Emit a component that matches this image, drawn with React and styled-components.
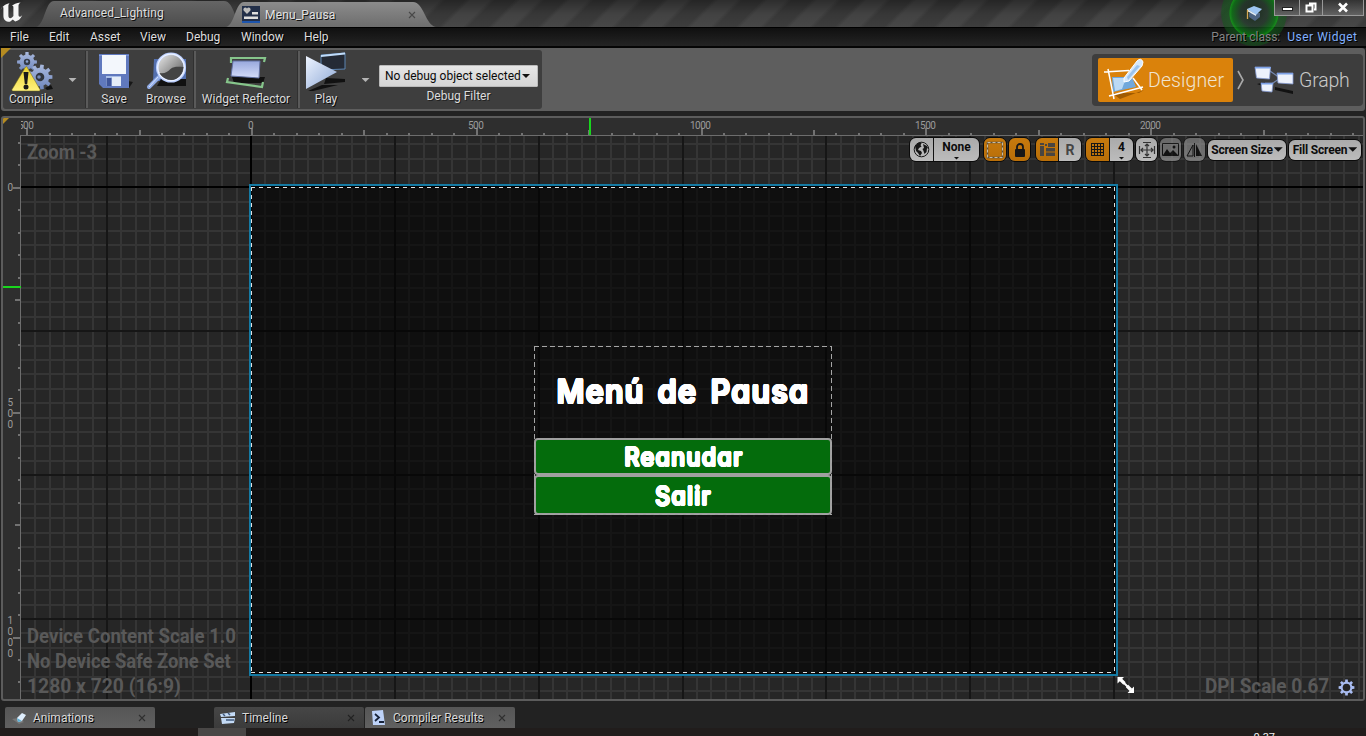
import React from "react";
import styled, { createGlobalStyle, css } from "styled-components";

const Global = createGlobalStyle`
  * { box-sizing: border-box; }
  body { margin: 0; overflow: hidden; background: #222; font-family: Roboto, "Liberation Sans", sans-serif; font-size: 12px; color: #dcdcdc; }
  svg { display: block; flex: none; }
`;

const Window = styled.div`
  width: 1366px; height: 736px; display: flex; flex-direction: column;
  overflow: hidden; background: #222; position: relative;
`;

/* ---------- title bar ---------- */
const TitleBar = styled.header`
  height: 28px; flex: none; display: flex; align-items: flex-start;
  border-bottom: 1px solid #000;
  background:
    linear-gradient(180deg, rgba(0,0,0,.32) 0, rgba(0,0,0,0) 14px, rgba(255,255,255,.03) 27px),
    repeating-linear-gradient(135deg, #373737 0 14px, #424242 18px 31px, #373737 35px);
`;
const Logo = styled.div` width: 36px; height: 27px; padding: 2px 0 0 0; `;
const Tab = styled.div`
  height: 27px; display: flex; align-items: center; flex: none;
  color: #dedede; text-shadow: 1px 1px 0 #111; letter-spacing: .16px;
  ${(p) => p.$active ? css`
    width: 210px; margin-left: -14px; padding: 2px 20px 0 16px; gap: 5px; color: #e2e2e2;
    background: linear-gradient(#8e8e8e, #6d6d6d);
    clip-path: path("M0 27 C9 25 9 2 18 2 L187 2 C198 2 199 25 210 27 Z");
  ` : css`
    width: 204px; padding: 0 24px 1px 24px;
    background: linear-gradient(#666, #4c4c4c);
    clip-path: path("M0 27 C9 25 9 1 18 1 L188 1 C199 1 199 27 208 27 Z");
  `}
`;
const TabName = styled.span` flex: 1; white-space: nowrap; `;
const TitleSpace = styled.div` flex: 1; `;
const WindowButtons = styled.div` display: flex; margin-right: 2px; height: 16px; position: relative; z-index: 3; `;
const WindowButton = styled.div`
  width: ${(p) => p.$w}px; height: 16px; display: flex; justify-content: center;
  border: 1px solid #999; border-top: 0; background: linear-gradient(#333, #626262);
  & + & { border-left: 0; }
`;
const TutorialBadge = styled.div` position: absolute; left: 1220px; top: 0; z-index: 2; `;

/* ---------- menu bar ---------- */
const MenuBar = styled.nav`
  height: 20px; flex: none; display: flex; align-items: center; padding: 0 9px 1px 10px;
  background: linear-gradient(#101010, #242424); border-bottom: 2px solid #050505;
  text-shadow: 1px 1px 0 #000; color: #dedede;
`;
const MenuItem = styled.span` width: ${(p) => p.$w}px; white-space: nowrap; `;
const ParentClass = styled.span` margin-left: auto; color: #858585; display: flex; gap: 7px; position: relative; z-index: 3; `;
const ClassLink = styled.span` color: #80b0ff; letter-spacing: .5px; margin-right: -.5px; `;

/* ---------- toolbar ---------- */
const ToolbarRow = styled.div`
  height: 63px; flex: none; display: flex; justify-content: space-between;
  margin: 0 1px; border: 2px solid #5e5e5e; border-radius: 3px; background: #5e5e5e; position: relative;
`;
const Corner = styled.i`
  position: absolute; left: -2px; top: -2px; width: 10px; height: 10px;
  background: #b58b21; clip-path: polygon(0 0, 100% 0, 0 100%);
`;
const ToolGroup = styled.div`
  display: flex; background: #3e3e3e; border-radius: 3px; width: 539px; height: 59px;
`;
const ToolButton = styled.div`
  width: ${(p) => p.$w}px; display: flex; flex-direction: column; align-items: center;
  padding-top: 1px; text-shadow: 1px 1px 0 #0b0b0b; white-space: nowrap; color: #dadada;
`;
const ToolLabel = styled.span` line-height: 14px; margin-top: -1px; `;
const Divider = styled.div` width: 2px; margin: 1px 0 1px ${(p) => p.$before || 0}px; background: #5a5a5a; box-shadow: -1px 0 #303030; `;
const Arrow = styled.i`
  width: ${(p) => p.$s || 8}px; height: ${(p) => (p.$s || 8) / 2}px; flex: none;
  background: ${(p) => p.$c || "#b5b5b5"}; clip-path: polygon(0 0, 100% 0, 50% 100%);
`;
const ArrowSlot = styled.div` width: ${(p) => p.$w}px; display: flex; justify-content: center; padding-top: 28px; `;
const FilterBox = styled.div` display: flex; flex-direction: column; align-items: center; padding: 15px 0 0 0; line-height: 14px; gap: 2px; text-shadow: 1px 1px 0 #222; `;
const Select = styled.div`
  width: 159px; height: 22px; background: linear-gradient(#e6e6e6, #d5d5d5); color: #0a0a0a; border: 1px solid #bbb;
  display: flex; align-items: center; justify-content: space-between; padding: 0 7px 0 5px; text-shadow: none; border-radius: 1px;
`;
const ModeGroup = styled.div`
  width: 271px; height: 52px; margin: 4px 0 0; background: #3d3d3d; border-radius: 4px;
  display: flex; align-items: center; padding-left: 6px; color: #c9c9c9; font-size: 19.5px; font-weight: 300;
`;
const Mode = styled.div`
  height: 44px; display: flex; align-items: center; border-radius: 2px; gap: ${(p) => p.$gap || 0}px;
  letter-spacing: -.2px;
  ${(p) => p.$active && css` width: 135px; background: #da820b; color: #f0e4d2; letter-spacing: .1px; padding-left: 1px; `}
`;

/* ---------- designer viewport ---------- */
const Viewport = styled.main`
  margin: 5px 1px 0 1px; height: 585px; flex: none; position: relative; overflow: hidden;
  border: 2px solid #5c5c5c; border-radius: 3px; background: #2e2e2e;
`;
const Surface = styled.div` position: absolute; left: -3px; top: -118px; width: 1366px; height: 736px; `;
const Sheet = styled.svg` position: absolute; left: 0; top: 0; `;
const TickLabel = styled.span`
  position: absolute; font-size: 10px; line-height: 11px; color: #9b9b9b; letter-spacing: -.5px;
  left: ${(p) => p.$x}px; top: ${(p) => p.$y}px;
  ${(p) => p.$stack && css` width: 12px; display: flex; flex-direction: column; align-items: center; `}
`;
const RulerMask = styled.div` position: absolute; left: 21px; top: 119px; width: 30px; height: 13px; overflow: hidden; `;
const Watermark = styled.div`
  position: absolute; left: ${(p) => p.$x}px; top: ${(p) => p.$y}px; white-space: nowrap;
  font-size: 20px; line-height: 25px; font-weight: 700; color: #595959;
`;
const Narrow = styled.div` width: max-content; transform: scaleX(${(p) => p.$k || 0.93}); transform-origin: 0 0; `;
const Gear = styled.div` position: absolute; left: 1338px; top: 679px; `;
const ResizeHandle = styled.div` position: absolute; left: 1117px; top: 676px; `;

const disc = (r) => Array.from({ length: 16 }, (_, i) =>
  `${(Math.cos((i * Math.PI) / 8) * r).toFixed(2)}px ${(Math.sin((i * Math.PI) / 8) * r).toFixed(2)}px 0 #fff`).join(",");

const MenuPanel = styled.section`
  position: absolute; left: 534px; top: 346px; width: 298px; height: 169px;
  display: flex; flex-direction: column; color: #fff; z-index: 1;
  font-family: Inter, Lato, sans-serif; font-weight: 500; font-feature-settings: "cv11" 1;
  text-align: center; text-shadow: ${disc(1.3)};
`;
const MenuTitle = styled.h1`
  margin: 0; height: 92px; font-size: 33px; line-height: 91px; white-space: nowrap; font-weight: inherit;
  letter-spacing: 1.6px; word-spacing: 4px; transform: scaleX(.92);
`;
const GameButton = styled.div`
  height: ${(p) => p.$h}px; border: 2px solid #a0a0a0; border-radius: 4px; background: rgba(4,112,12,.97);
  font-size: 25px; line-height: ${(p) => p.$h - 2}px; text-shadow: ${disc(1)};
`;
const ButtonText = styled.span` display: inline-block; letter-spacing: 1.4px; margin-right: -1.4px; transform: scaleX(.93); `;

const DesignerBar = styled.div`
  position: absolute; left: 909px; top: 137px; display: flex; align-items: center; height: 25px;
  color: #0c0c0c; font-weight: 700;
`;
const Segments = styled.div`
  display: flex; height: ${(p) => p.$h || 25}px; overflow: hidden; margin-right: ${(p) => p.$gap || 0}px;
  border: 1px solid #0b0b0b; border-radius: 7px; opacity: ${(p) => (p.$off ? 0.5 : 1)};
`;
const Segment = styled.div`
  width: ${(p) => p.$w}px; display: flex; align-items: center; justify-content: center; position: relative; white-space: nowrap;
  background: ${(p) => p.$on ? "linear-gradient(#c67a0e,#b96e08)" : "linear-gradient(#aaa,#bcbcbc)"};
  & + & { border-left: ${(p) => (p.$plain ? 0 : 1)}px solid #111; }
  gap: ${(p) => (p.$tight ? 1 : 2)}px; letter-spacing: ${(p) => (p.$tight ? "-.2px" : "0")};
`;
const Letter = styled.span` color: #454545; font-size: 14px; `;
const Stacked = styled.div` display: flex; flex-direction: column; align-items: center; line-height: 13px; gap: 3px; padding-top: 1px; `;

/* ---------- bottom docks ---------- */
const Dock = styled.footer` height: 27px; flex: none; display: flex; padding: 6px 0 0 5px; background: #222; `;
const DockTab = styled.div`
  width: 150px; height: 21px; display: flex; align-items: center; border-radius: 2px 2px 0 0; margin-right: ${(p) => p.$gap || 0}px;
  padding: 0 9px 0 6px; gap: ${(p) => p.$g || 6}px; text-shadow: 1px 1px 0 #000; color: #d8d8d8;
  background: ${(p) => p.$dim ? "linear-gradient(#464646,#3b3b3b)" : "linear-gradient(#565656,#606060)"};
`;
const UnderStrip = styled.div`
  height: 9px; flex: none; background: #211d1c; display: flex; justify-content: space-between; padding: 0 91px 0 198px; overflow: hidden;
`;
const StripBlock = styled.i` width: 48px; height: 9px; background: #494746; `;
const StripText = styled.span` font-size: 11px; line-height: 12px; padding-top: 4px; color: #f0f0f0; `;

/* ---------- drawings ---------- */
const Close = ({ c = "#555" }) => (
  <svg width="8" height="8" viewBox="0 0 8 8"><path d="M1 1l6 6M7 1L1 7" stroke={c} strokeWidth="1.1" /></svg>
);
const Unreal = () => (
  <svg width="24" height="21" viewBox="0 0 24 21">
    <path fill="#f4f4f4" d="M.5 8.2C2.6 3.7 6 1.7 9.7 1.2 8.8 2 8.4 2.8 8.4 4v9.4c0 1.7.7 2.8 1.8 2.8 1.2 0 2.4-1 3.2-2.1V5.2c0-1.1-.5-1.5-1.5-1.1 1.8-2 4.1-3 8.8-3.6-1.6 1.1-2.2 2-2.2 3.4v8.9c0 1.3.5 1.9 1.3 1.9.8 0 1.6-.6 2.4-1.5-1.6 4-4.2 5.7-7 6.2l-2.4-2-2.8 2.4c-4 .2-6.6-2-6.6-5.8V6.4c0-1.1-.2-1.4-.7-1.4C2 5 1.200 6.300.5 8.200z" />
  </svg>
);
const WidgetIcon = () => (
  <svg width="18" height="17" viewBox="0 0 18 17">
    <rect width="18" height="17" fill="#222f49" /><rect y="15" width="18" height="2" fill="#1d55ad" />
    <path d="M5 8 1.600 4.600C.5 2 3.600.300 5 2.400 6.400.300 9.500 2 8.400 4.600z" fill="#bdbdbd" />
    <path d="M10 6h6v2.500h-6zM2 10.500h14V13H2z" fill="#ddd" />
  </svg>
);
const gearPath = (cx, cy, r, n = 8) => {
  let d = "";
  for (let i = 0; i < n; i++) {
    const a = (i * 2 * Math.PI) / n, s = Math.PI / n;
    const pt = (t, q) => `${(cx + Math.cos(t) * q).toFixed(1)} ${(cy + Math.sin(t) * q).toFixed(1)}`;
    d += `${i ? "L" : "M"}${pt(a - s * 0.6, r * 0.74)}L${pt(a - s * 0.4, r)}L${pt(a + s * 0.4, r)}L${pt(a + s * 0.6, r * 0.74)}`;
  }
  return d + "Z";
};
const CompileIcon = () => (
  <svg width="44" height="42" viewBox="0 0 44 42">
    <defs><linearGradient id="cg" x2="0" y2="1"><stop stopColor="#a9b9dd" /><stop offset="1" stopColor="#6f87bd" /></linearGradient>
      <linearGradient id="cy" x2="0" y2="1"><stop stopColor="#e8d02c" /><stop offset="1" stopColor="#fff27e" /></linearGradient></defs>
    <path d="M36 37l6-3 2 4-6 1z" fill="#111" />
    <path d={gearPath(18, 11, 10)} fill="url(#cg)" /><circle cx="18" cy="11" r="3.2" fill="#343b49" /><circle cx="18" cy="10.500" r="1.300" fill="#8ba2d1" />
    <path d={gearPath(31, 26, 12.500, 9)} fill="url(#cg)" /><circle cx="31" cy="26" r="4.300" fill="#30343c" /><circle cx="30" cy="26" r="1.800" fill="#7389b7" />
    <path d="M16.500 16 3 38.500q-.5 1.500 1 1.500h26q1.500 0 1-1.500L18 16q-.7-1-1.500 0z" fill="url(#cy)" stroke="#6b6019" strokeWidth=".5" />
    <path d="M14.500 21h5l-1.300 12h-2.400z" fill="#191919" /><circle cx="17" cy="36" r="2.500" fill="#191919" />
  </svg>
);
const SaveIcon = () => (
  <svg width="40" height="42" viewBox="0 0 40 42">
    <path d="M34 30l5 1-4 6H12z" fill="#171717" />
    <path d="M5 3h30v34H9l-4-4z" fill="#6079be" /><path d="M5 4h30v1H5z" fill="#7894d4" />
    <path d="M8 4h24v19H8z" fill="#f3f7fc" /><path d="M12 25h15v10H12z" fill="#a9bfe8" /><path d="M12.500 27h5v8h-5z" fill="#3f559a" /><path d="M18 26h9v9h-9z" fill="#e4edf8" />
  </svg>
);
const BrowseIcon = () => (
  <svg width="42" height="42" viewBox="0 0 42 42">
    <defs><linearGradient id="bg" x2="1" y2="1"><stop stopColor="#eee" /><stop offset=".6" stopColor="#8d8d8d" /><stop offset="1" stopColor="#333" /></linearGradient></defs>
    <path d="M9 8h32v22H8z" fill="#536fae" /><path d="M16 28h25v7H12z" fill="#111" />
    <path d="M14 26 4 36" stroke="#92ade7" strokeWidth="4" strokeLinecap="round" /><path d="M13 26 4 36" stroke="#d5e2ff" />
    <circle cx="26" cy="16.500" r="13.800" fill="url(#bg)" stroke="#b9ceff" strokeWidth="2.500" />
    <circle cx="26" cy="16.500" r="13.300" fill="none" stroke="#eef3ff" strokeWidth="1.300" />
    <path d="M14.500 22c5 1 8-1 11-4 4-3 8-2 13-2-1 7-6 13-12 13-5 0-10-3-12-7" fill="#444" />
  </svg>
);
const ReflectorIcon = () => (
  <svg width="44" height="42" viewBox="0 0 44 42">
    <defs><linearGradient id="rg" x2="0" y2="1"><stop stopColor="#98a8dc" /><stop offset="1" stopColor="#d5ddfa" /></linearGradient></defs>
    <path d="M8 26h33l-2 6H10z" fill="#111" /><path d="M9 10h27l-1 17-28-2z" fill="url(#rg)" stroke="#6170a1" />
    <path d="M7 12V7h34l-1 4M4 27l-1 4 35 5 1-5" fill="none" stroke="#86c58b" strokeWidth="2.200" />
  </svg>
);
const PlayIcon = () => (
  <svg width="44" height="42" viewBox="0 0 44 42">
    <defs><linearGradient id="pg" x2="1" y2="1"><stop stopColor="#eef4ff" /><stop offset="1" stopColor="#8da8d5" /></linearGradient></defs>
    <path d="M17 4 41 2v16l-24 1z" fill="#242a35" stroke="#5b84b2" /><path d="M17 4 41 1.500v2L17 6z" fill="#c0dcfa" />
    <path d="M4 40l14-6 16 0-25 6zM22 27l19 1v3l-21 2z" fill="#111" /><path d="M2 5 33 21 2 38z" fill="url(#pg)" />
  </svg>
);
const DesignerIcon = () => (
  <svg width="49" height="44" viewBox="0 0 49 44">
    <path d="M13 35h27l5-3-24 9z" fill="#a05b00" /><path d="M13 19h20l4 10-23 5z" fill="#71a8db" /><path d="M14 20h13l-4 11-7 2z" fill="#bcdaf5" />
    <path d="M5 14 30 12.500M10 38 44 29M9 11l6 30M34 20l9 12" stroke="#fff" strokeWidth="1.500" />
    <path d="M25 20 38 3q4-4 6 1l-1 4-13 15-5 1z" fill="#d5e8fb" stroke="#fff" /><path d="M28 19 38 7l3 1-12 14z" fill="#9bc3ed" />
  </svg>
);
const GraphIcon = () => (
  <svg width="42" height="36" viewBox="0 0 42 36">
    <path d="M4 22l8-2v5zM22 25l18 4v3l-18-4z" fill="#121212" />
    <path d="M17 9 27 16M17 23l9-6" stroke="#7386ad" strokeWidth="1.200" />
    <g fill="#edf2fc" stroke="#8398cf" strokeWidth=".8"><path d="M2 5l15.500 0-1 12-13-1z" /><path d="M24 11l16 0v11l-15-1z" /><path d="M8 21l12 0-1 9-10-1z" /></g>
    <path d="M2 5h16v1.500H2zM24 11h16v1.500H24zM8 21h12v1.500H8z" fill="#7da1e6" />
  </svg>
);
const Tutorial = () => (
  <svg width="68" height="48" viewBox="0 0 68 48">
    <defs><radialGradient id="tg"><stop offset="0" stopColor="#1d2b1e" /><stop offset=".4" stopColor="#22382a" stopOpacity=".75" /><stop offset=".66" stopColor="#0a7613" stopOpacity=".8" /><stop offset=".73" stopColor="#0f9d14" stopOpacity=".8" /><stop offset=".76" stopColor="#12651b" stopOpacity=".55" /><stop offset="1" stopColor="#115819" stopOpacity=".5" /></radialGradient></defs>
    <circle cx="34" cy="13" r="33" fill="url(#tg)" />
    <path d="M29 13v4l6 4 5-4v-4z" fill="#4c6381" /><path d="M27 9l7-3 8 3-6 6z" fill="#9dc5f2" /><path d="M27 9l9 5.500v1.500l-9-5z" fill="#e4edf4" /><path d="M27.500 10v9" stroke="#d4a653" strokeWidth="1.300" />
  </svg>
);

const range = (a, b) => Array.from({ length: b - a + 1 }, (_, i) => a + i);

const GridSheet = () => {
  const line = (k) => (k === 0 ? "#000" : k % 10 === 0 ? "#161616" : "#353535");
  const xs = range(-15, 77), ys = range(-3, 35);
  const vx = (k) => <rect key={"v" + k} x={Math.floor(250.44 + 14.387 * k)} y="136" width="2" height="564" fill={line(k)} />;
  const hy = (k) => <rect key={"h" + k} x="21" y={Math.floor(186.85 + 14.387 * k)} width="1343" height="2" fill={line(k)} />;
  const tick = (k) => (k % 10 === 0 ? 7 : k % 5 === 0 ? 5 : 2);
  return (
    <Sheet width="1366" height="736" shapeRendering="crispEdges">
      <rect x="21" y="136" width="1343" height="564" fill="#262626" />
      {xs.filter((k) => k % 10).map(vx)}{ys.filter((k) => k % 10).map(hy)}
      {xs.filter((k) => k && k % 10 === 0).map(vx)}{ys.filter((k) => k && k % 10 === 0).map(hy)}
      {vx(0)}{hy(0)}
      <path d="M21 135.500H1364M20.500 135V700" stroke="#6d6d6d" />
      {range(-10, 49).map((k) => <rect key={"t" + k} x={Math.round(250.900 + 22.480 * k)} y={135 - tick(k)} width="2" height={tick(k)} fill="#727272" />)}
      {range(-2, 22).map((k) => <rect key={"l" + k} x={20 - tick(k)} y={Math.round(186.900 + 22.480 * k)} width={tick(k)} height="2" fill="#727272" />)}
      <path d="M590 118V135M3 287H21" stroke="#19d51d" strokeWidth="2" />
      <rect x="251" y="187" width="864" height="486" fill="#000" opacity=".6" />
      <rect x="250" y="185" width="867" height="490" fill="none" stroke="#157aa3" strokeWidth="2" />
      <rect x="251" y="187" width="864" height="486" fill="none" stroke="#080808" />
      <path d="M251 187.500H1115M251.500 187V673M1114.500 187V673M251 672.500H1115" stroke="#e0e0e0" strokeDasharray="4 4" />
    </Sheet>
  );
};

const PanelSheet = styled(Sheet)` z-index: 2; `;
const PanelDashes = () => (
  <PanelSheet width="1366" height="736" shapeRendering="crispEdges">
    <path d="M534 346.500H832M534.500 346V515M831.500 346V515M534 514.500H832" stroke="#a5a5a5" strokeDasharray="5 3" />
  </PanelSheet>
);

const ink = "#171717";
const Tools = () => (
  <DesignerBar>
    <Segments $gap={3}>
      <Segment $w={23}><svg width="17" height="17" viewBox="0 0 17 17"><circle cx="8.500" cy="8.500" r="7.300" fill="#b8b8b8" stroke={ink} /><path fill={ink} d="M2 5 5 2l4-.5L7.500 4l1 1.500L6 7 5 9l3 1 1 2-2 3-2-3-2-2zM10 3l4 2 1.500 3L14 7l-.5 4-2 2-1-3-1-2 1.500-1z" /></svg></Segment>
      <Segment $w={46}><Stacked>None<Arrow $s={6} $c="#111" /></Stacked></Segment>
    </Segments>
    <Segments $gap={1}><Segment $on $w={22}><svg width="18" height="18" viewBox="0 0 18 18"><rect x="1.500" y="1.500" width="15" height="15" fill="none" stroke="#5a5040" strokeWidth="1.500" /><rect x="1.500" y="1.500" width="15" height="15" fill="none" stroke="#c4bba8" strokeWidth="1" strokeDasharray="3 2" /></svg></Segment></Segments>
    <Segments $gap={4}><Segment $on $w={21}><svg width="12" height="14" viewBox="0 0 12 14"><rect x="1" y="6" width="10" height="8" rx="1" fill={ink} /><path d="M3 7V4a3 3 0 0 1 6 0v3" fill="none" stroke={ink} strokeWidth="1.800" /></svg></Segment></Segments>
    <Segments $gap={3}>
      <Segment $on $w={22}><svg width="15" height="13" viewBox="0 0 15 13"><path d="M0 3h4v10H0zM0 0h4v2H0zM5 1h2v2H5zM8 0h7v4H8zM6 5h9v3.500H6zM6 9.500h9V13H6z" fill="#494541" /></svg></Segment>
      <Segment $w={23} $plain><Letter>R</Letter></Segment>
    </Segments>
    <Segments $gap={1}>
      <Segment $on $w={23}><svg width="13" height="13" viewBox="0 0 13 13" shapeRendering="crispEdges"><path d="M0 .5h13M0 3.500h13M0 6.500h13M0 9.500h13M0 12.500h13M.5 0v13M3.500 0v13M6.500 0v13M9.500 0v13M12.500 0v13" stroke={ink} /></svg></Segment>
      <Segment $w={24}><Stacked>4<Arrow $s={6} $c="#111" /></Stacked></Segment>
    </Segments>
    <Segments $gap={1}><Segment $w={21}><svg width="18" height="18" viewBox="0 0 18 18"><path d="M5 1.500h8M5 16.500h8M1.500 5v8M16.500 5v8M9 3v12M3 9h12M7 5l2-2 2 2M7 13l2 2 2-2M5 7 3 9l2 2M13 7l2 2-2 2" fill="none" stroke="#333" strokeWidth="1.200" /></svg></Segment></Segments>
    <Segments $off $gap={1}><Segment $w={21}><svg width="17" height="13" viewBox="0 0 17 13"><path d="M.5.5h16v12H.500z" fill="none" stroke="#000" /><path d="M1 12l4-6 3 4 3-3 5 5z" fill="#000" /><circle cx="12" cy="4" r="1.500" /></svg></Segment></Segments>
    <Segments $off $gap={1}><Segment $w={21}><svg width="17" height="14" viewBox="0 0 17 14"><path d="M7 2v11H1z" fill="none" stroke="#000" /><path d="M10 1v12h6z" /><path d="M8.500 0v14" stroke="#000" /></svg></Segment></Segments>
    <Segments $h={22} $gap={1}><Segment $w={78} $tight>Screen Size<Arrow $s={9} $c="#111" /></Segment></Segments>
    <Segments $h={22}><Segment $w={72} $tight>Fill Screen<Arrow $s={9} $c="#111" /></Segment></Segments>
  </DesignerBar>
);

export default function App() {
  return (
    <Window>
      <Global />
      <TitleBar>
        <Logo><Unreal /></Logo>
        <Tab><TabName>Advanced_Lighting</TabName></Tab>
        <Tab $active><WidgetIcon /><TabName>Menu_Pausa</TabName><Close c="#484848" /></Tab>
        <TitleSpace />
        <WindowButtons>
          <WindowButton $w={26}><svg width="12" height="15"><rect x="1.500" y="7.500" width="10" height="3" fill="#fff" stroke="#222" /></svg></WindowButton>
          <WindowButton $w={23}><svg width="12" height="15" viewBox="0 0 12 15"><path d="M4 3.500h6.500v6H9M1.500 5.500h6v6h-6z" fill="none" stroke="#fff" strokeWidth="2" /></svg></WindowButton>
          <WindowButton $w={41}><svg width="12" height="15" viewBox="0 0 12 15"><path d="M2 3.500l8 8M10 3.500l-8 8" stroke="#fff" strokeWidth="2.600" /></svg></WindowButton>
        </WindowButtons>
      </TitleBar>
      <TutorialBadge><Tutorial /></TutorialBadge>

      <MenuBar>
        {[["File", 39], ["Edit", 41], ["Asset", 50], ["View", 46], ["Debug", 55], ["Window", 63], ["Help", 40]].map(([t, w]) => <MenuItem key={t} $w={w}>{t}</MenuItem>)}
        <ParentClass>Parent class:<ClassLink>User Widget</ClassLink></ParentClass>
      </MenuBar>

      <ToolbarRow>
        <ToolGroup>
          <ToolButton $w={56}><CompileIcon /><ToolLabel>Compile</ToolLabel></ToolButton>
          <ArrowSlot $w={27}><Arrow /></ArrowSlot>
          <Divider />
          <ToolButton $w={52}><SaveIcon /><ToolLabel>Save</ToolLabel></ToolButton>
          <ToolButton $w={52}><BrowseIcon /><ToolLabel>Browse</ToolLabel></ToolButton>
          <Divider $before={2} />
          <ToolButton $w={100}><ReflectorIcon /><ToolLabel>Widget Reflector</ToolLabel></ToolButton>
          <Divider $before={2} />
          <ToolButton $w={52}><PlayIcon /><ToolLabel>Play</ToolLabel></ToolButton>
          <ArrowSlot $w={27}><Arrow /></ArrowSlot>
          <FilterBox><Select>No debug object selected<Arrow $c="#111" /></Select>Debug Filter</FilterBox>
        </ToolGroup>
        <ModeGroup>
          <Mode $active><DesignerIcon />Designer</Mode>
          <svg width="20" height="24" viewBox="0 0 20 24"><path d="M5 3l5 9-5 9" fill="none" stroke="#a9a9a9" strokeWidth="1.600" /></svg>
          <Mode $gap={4}><GraphIcon />Graph</Mode>
        </ModeGroup>
        <Corner />
      </ToolbarRow>

      <Viewport>
        <Surface>
          <GridSheet />
          <RulerMask><TickLabel $x={-3} $y={1}>500</TickLabel></RulerMask>
          <TickLabel $x={248} $y={120}>0</TickLabel>
          {[500, 1000, 1500, 2000].map((n, i) => <TickLabel key={n} $x={[468, 690, 915, 1140][i]} $y={120}>{n}</TickLabel>)}
          {[["0", 182], ["500", 397], ["1000", 615]].map(([n, y]) => (
            <TickLabel key={n} $stack $x={4} $y={y}>{n.split("").map((d, i) => <span key={i}>{d}</span>)}</TickLabel>
          ))}
          <Watermark $x={27} $y={140}><Narrow $k={0.92}>Zoom -3</Narrow></Watermark>
          <Watermark $x={27} $y={624}>
            <Narrow>Device Content Scale 1.0</Narrow><Narrow $k={0.92}>No Device Safe Zone Set</Narrow><Narrow $k={0.965}>1280 x 720 (16:9)</Narrow>
          </Watermark>
          <Watermark $x={1205} $y={674}><Narrow $k={0.945}>DPI Scale 0.67</Narrow></Watermark>
          <Gear><svg width="17" height="17" viewBox="0 0 17 17"><path d={gearPath(8.5, 8.5, 8)} fill="#a9bcf0" /><circle cx="8.500" cy="8.500" r="3.800" fill="#242424" /></svg></Gear>
          <ResizeHandle><svg width="18" height="18" viewBox="0 0 18 18"><path d="M3 3l4.500 4.500M10 10l4 4" stroke="#fff" strokeWidth="3.200" /><path d="M7 7l3.500 3.500" stroke="#fff" strokeWidth="2" /><path d="M.5 1h6.500L.5 7.500zM17 17h-6.500L17 10.500z" fill="#fff" /></svg></ResizeHandle>
          <MenuPanel>
            <MenuTitle>Menú de Pausa</MenuTitle>
            <GameButton $h={37}><ButtonText>Reanudar</ButtonText></GameButton>
            <GameButton $h={40}><ButtonText>Salir</ButtonText></GameButton>
          </MenuPanel>
          <PanelDashes />
          <Tools />
        </Surface>
        <Corner />
      </Viewport>

      <Dock>
        <DockTab $gap={59}>
          <svg width="16" height="14" viewBox="0 0 16 14"><path d="M1 8l7 5 5-2-6-4z" fill="#777" /><path d="M6 7l5-5 4 2-4 6-4 1z" fill="#dfeefd" /><path d="M6 7l5 3-4 1z" fill="#5eb0d3" /></svg>
          <TabName>Animations</TabName><Close c="#303030" />
        </DockTab>
        <DockTab $dim $gap={1}>
          <svg width="16" height="14" viewBox="0 0 16 14"><path d="M0 3l15-2v4L1 6zM1 7h14l-1 5-12 1z" fill="#c3daf5" /><path d="M3 3l2 2M8 2l2 2M6 9h8" stroke="#40597e" strokeWidth="1.500" /></svg>
          <TabName>Timeline</TabName><Close c="#222" />
        </DockTab>
        <DockTab $g={7}>
          <svg width="15" height="16" viewBox="0 0 15 16"><path d="M1 1l11-1 2 15H2z" fill="#bdd2f8" /><path d="M4 4l4 3.500L4 11M8 12h5" fill="none" stroke="#17233a" strokeWidth="1.800" /></svg>
          <TabName>Compiler Results</TabName><Close c="#303030" />
        </DockTab>
      </Dock>
      <UnderStrip><StripBlock /><StripText>0.37</StripText></UnderStrip>
    </Window>
  );
}
